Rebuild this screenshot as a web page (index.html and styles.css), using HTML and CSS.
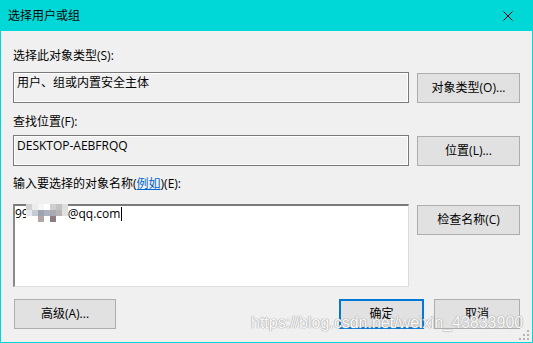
FILE: index.html
```html
<!DOCTYPE html>
<html lang="zh-CN">

<head>
    <meta charset="UTF-8">
    <meta name="viewport" content="width=device-width, initial-scale=1.0">
    <title>选择用户或组</title>
    <link rel="stylesheet" href="styles.css">
</head>

<body>
    <div class="window">
        <div class="titlebar">
            <span class="title">选择用户或组</span>
            <svg class="close" width="10" height="10" viewBox="0 0 10 10">
                <path d="M0.5 0.5 L9.5 9.5 M9.5 0.5 L0.5 9.5" stroke="#000" stroke-width="1" fill="none" />
            </svg>
        </div>
        <div class="content">
            <div class="label">选择此对象类型(S):</div>
            <div class="row">
                <div class="field">用户、组或内置安全主体</div>
                <button class="btn btn-side">对象类型(O)...</button>
            </div>

            <div class="label label-2">查找位置(F):</div>
            <div class="row">
                <div class="field">DESKTOP-AEBFRQQ</div>
                <button class="btn btn-side">位置(L)...</button>
            </div>

            <div class="label label-3">输入要选择的对象名称(<a class="link">例如</a>)(E):</div>
            <div class="row row-names">
                <div class="field field-edit">99<span class="mosaic">
                        <i style="background:#d2d2d2"></i><i style="background:#ececec"></i><i style="background:#f6f6f6"></i><i style="background:#fff"></i><i style="background:#cfcfcf"></i><i style="background:#c2c2c2"></i><i style="background:#dedede"></i>
                        <i style="background:#e6e8ee"></i><i style="background:#c6cad2"></i><i style="background:#9ca4b2"></i><i style="background:#acb2be"></i><i style="background:#a9abb2"></i><i style="background:#b9b4b4"></i><i style="background:#e2e2e2"></i>
                        <i style="background:#fff"></i><i style="background:#fff"></i><i style="background:#b2a6a6"></i><i style="background:#fff"></i><i style="background:#8c7e7e"></i><i style="background:#fff"></i><i style="background:#fff"></i>
                    </span>@qq.com<span class="caret"></span></div>
                <button class="btn btn-side btn-check">检查名称(C)</button>
            </div>

            <div class="footer">
                <button class="btn btn-adv">高级(A)...</button>
                <div class="footer-right">
                    <button class="btn btn-ok">确定</button>
                    <button class="btn btn-cancel">取消</button>
                </div>
            </div>
        </div>

        <div class="watermark">https://blog.csdn.net/weixin_43833900</div>
        <svg class="grip" width="10" height="10" viewBox="0 0 10 10">
            <rect x="8" y="0" width="2" height="2" fill="#b4b4b4" />
            <rect x="4" y="4" width="2" height="2" fill="#b4b4b4" />
            <rect x="8" y="4" width="2" height="2" fill="#b4b4b4" />
            <rect x="0" y="8" width="2" height="2" fill="#b4b4b4" />
            <rect x="4" y="8" width="2" height="2" fill="#b4b4b4" />
            <rect x="8" y="8" width="2" height="2" fill="#b4b4b4" />
        </svg>
    </div>
</body>

</html>
```

FILE: styles.css
```css
* {
    box-sizing: border-box;
}

body {
    margin: 0;
    font-family: "Segoe UI", "Open Sans", "Noto Sans CJK SC", sans-serif;
    font-size: 12px;
    color: #000;
}

.window {
    position: relative;
    width: 533px;
    height: 343px;
    border: 1px solid #00d7d7;
    background-color: #f0f0f0;
}

.titlebar {
    height: 30px;
    padding-left: 7px;
    padding-right: 19px;
    background-color: #00d7d7;
    display: flex;
    align-items: center;
    justify-content: space-between;
}

.title {
    line-height: 16px;
}

.close {
    display: block;
}

.content {
    padding: 17px 12px 0 12px;
}

.label {
    height: 16px;
    line-height: 16px;
    margin-bottom: 8px;
}

.label-2 {
    margin-top: 11px;
    margin-bottom: 5px;
}

.label-3 {
    margin-top: 10px;
    margin-bottom: 12px;
}

.link {
    color: #0066cc;
    text-decoration: underline;
}

.row {
    display: flex;
    align-items: center;
    gap: 8px;
}

.field {
    flex: 1;
    height: 31px;
    padding: 2px 3px;
    line-height: 16px;
    border: 1px solid #7a7a7a;
    box-shadow: inset 0 0 0 1px #fff;
    white-space: nowrap;
}

.row-names {
    align-items: flex-start;
}

.field-edit {
    height: 83px;
    padding: 0;
    background-color: #fff;
    box-shadow: none;
    border-style: solid;
    border-width: 2px 1px 1px 2px;
    border-color: #7a7a7a #dcdcdc #dcdcdc #8a8a8a;
}

.mosaic {
    display: inline-grid;
    grid-template-columns: repeat(7, 6px);
    grid-auto-rows: 6px;
    vertical-align: top;
    margin-top: -2px;
    margin-left: -3px;
}

.mosaic i {
    display: block;
}

.caret {
    display: inline-block;
    width: 1px;
    height: 14px;
    margin-left: 1px;
    vertical-align: -3px;
    background-color: #000;
}

.btn {
    height: 30px;
    padding: 0;
    font-family: inherit;
    font-size: 12px;
    line-height: 28px;
    color: #000;
    background-color: #e1e1e1;
    border: 1px solid #adadad;
    outline: none;
    cursor: pointer;
}

.btn-side {
    width: 103px;
    flex: none;
}

.btn-check {
    margin-top: 1px;
}

.footer {
    margin-top: 12px;
    display: flex;
    justify-content: space-between;
}

.btn-adv {
    width: 102px;
    margin-left: 1px;
}

.footer-right {
    display: flex;
    gap: 10px;
}

.btn-ok {
    width: 85px;
    border: 2px solid #0078d7;
    line-height: 26px;
}

.btn-cancel {
    width: 86px;
}

.watermark {
    position: absolute;
    left: 250px;
    top: 313px;
    font-family: "Liberation Sans", Arial, sans-serif;
    font-size: 16px;
    line-height: 18px;
    color: #fafafa;
    text-shadow: 0 0 1px #a8a8a8, 0 0 1px #a8a8a8, 0 0 1px #a8a8a8;
}

.grip {
    position: absolute;
    right: 3px;
    bottom: 2px;
}
```
